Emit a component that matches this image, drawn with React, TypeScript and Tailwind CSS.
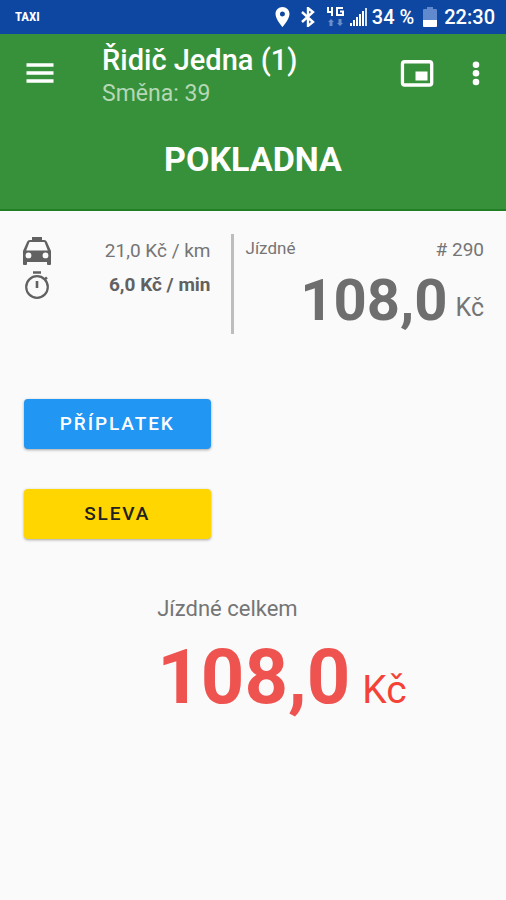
import type { ReactNode } from 'react'

const SIGNAL_BARS = [3, 6, 9, 12, 15, 18]

function Icon({ className, children }: { className: string; children: ReactNode }) {
  return (
    <svg viewBox="0 0 24 24" fill="currentColor" aria-hidden="true" className={`shrink-0 ${className}`}>
      {children}
    </svg>
  )
}

function StatusBar() {
  return (
    <div className="flex h-[34px] items-center bg-[#0d47a1] pl-[15px] pr-[11px] text-white">
      <span className="font-['Liberation_Sans_Narrow','Roboto_Condensed',Roboto,sans-serif] text-[13px] font-bold">TAXI</span>
      <div className="ml-auto flex items-center">
        <svg viewBox="0 0 14 20" aria-hidden="true" className="h-5 w-[15px]">
          <path
            d="M7 0C3.1 0 0 3.1 0 7c0 5.2 7 13 7 13s7-7.8 7-13c0-3.9-3.1-7-7-7zm0 9.5a2.5 2.5 0 1 1 0-5 2.5 2.5 0 0 1 0 5z"
            fill="#fff"
          />
        </svg>
        <svg viewBox="0 0 14 20" aria-hidden="true" className="ml-[11px] h-5 w-[14px]">
          <path d="M1 5l11 10-5 4V1l5 4L1 15" fill="none" stroke="#fff" strokeWidth="2.4" />
        </svg>
        <svg viewBox="0 0 18 20" aria-hidden="true" className="ml-[11px] h-5 w-[18px]">
          <path d="M2 0v5h5M6 0v9M17 1h-6v7h6V4.5h-3" fill="none" stroke="#fff" strokeWidth="2" />
          <path d="M5 12l3 3H6.5v4h-3v-4H2zM14 19l-3-3h1.5v-4h3v4H17z" fill="#6d8fc9" />
        </svg>
        <svg viewBox="0 0 18 20" aria-hidden="true" className="ml-[6px] h-5 w-[18px]">
          {SIGNAL_BARS.map((h, i) => (
            <rect key={h} x={i * 3} y={19 - h} width="2" height={h} fill={i < 5 ? '#fff' : '#d5e0f3'} />
          ))}
        </svg>
        <span className="ml-1 text-[20px] font-medium leading-6">34 %</span>
        <svg viewBox="0 0 14 20" aria-hidden="true" className="ml-[9px] h-5 w-[14px]">
          <path d="M4 0h6v2h3a1 1 0 0 1 1 1v11H0V3a1 1 0 0 1 1-1h3z" fill="#6089ce" />
          <path d="M0 13h14v6a1 1 0 0 1-1 1H1a1 1 0 0 1-1-1z" fill="#fff" />
        </svg>
        <span className="ml-[7px] text-[20px] font-medium leading-6">22:30</span>
      </div>
    </div>
  )
}

function Header() {
  return (
    <header className="border-b-2 border-[#1f7f22] bg-[#37913a] pb-[30px] text-white">
      <div className="flex items-start pl-[22px] pr-3 pt-2">
        <button type="button" aria-label="Menu" className="mt-[13px]">
          <Icon className="h-9 w-9">
            <path d="M3 18.5h18v-2.4H3zM3 13.2h18v-2.4H3zM3 5.5v2.4h18V5.5z" />
          </Icon>
        </button>
        <div className="ml-[44px] flex-1">
          <div className="text-[29px] font-medium leading-9">Řidič Jedna (1)</div>
          <div className="text-[23px] leading-8 text-[#b5d8b6]">Směna: 39</div>
        </div>
        <button type="button" aria-label="Obraz v obraze" className="mt-[13px]">
          <Icon className="h-9 w-9">
            <rect x="2.3" y="4.5" width="19.5" height="15.5" rx="1.5" fill="none" stroke="currentColor" strokeWidth="2.2" />
            <rect x="11" y="11" width="8" height="6" />
          </Icon>
        </button>
        <button type="button" aria-label="Další možnosti" className="ml-[23px] mt-[13px]">
          <Icon className="h-9 w-9">
            <circle cx="12" cy="6.5" r="2.2" />
            <circle cx="12" cy="12.2" r="2.2" />
            <circle cx="12" cy="18" r="2.2" />
          </Icon>
        </button>
      </div>
      <h1 className="mt-[29px] text-center text-[34px] font-bold leading-10">POKLADNA</h1>
    </header>
  )
}

function Rates() {
  return (
    <div className="flex h-[100px] flex-col border-r-[3px] border-[#bdbdbd] pl-[23px] pr-5 text-[19px] leading-[34px] text-[#757575]">
      <div className="flex items-center justify-between">
        <svg viewBox="0 0 28 28" aria-hidden="true" className="h-7 w-7 text-[#616161]">
          <path
            d="M9 0h10v3h2c1.5 0 2.5.8 3 2l4 9v13a1 1 0 0 1-1 1h-2a1 1 0 0 1-1-1v-2H4v2a1 1 0 0 1-1 1H1a1 1 0 0 1-1-1V14l4-9c.5-1.2 1.5-2 3-2h2zM6.5 5L3.2 13.5h21.6L21.5 5zM5.5 15.5a2.9 2.9 0 1 0 0 5.8 2.9 2.9 0 0 0 0-5.8zm17 0a2.9 2.9 0 1 0 0 5.8 2.9 2.9 0 0 0 0-5.8z"
            fill="currentColor"
            fillRule="evenodd"
          />
        </svg>
        <span>21,0 Kč / km</span>
      </div>
      <div className="flex items-center justify-between">
        <svg viewBox="0 0 28 28" aria-hidden="true" className="h-7 w-7 text-[#616161]">
          <circle cx="14" cy="16" r="10.8" fill="none" stroke="currentColor" strokeWidth="2.2" />
          <path d="M14 10v7M10 1.5h8M21.5 8.5l2.5-2" fill="none" stroke="currentColor" strokeWidth="2.6" />
        </svg>
        <span className="font-bold text-[#616161]">6,0 Kč / min</span>
      </div>
    </div>
  )
}

function Fare() {
  return (
    <div className="pl-3 pr-[22px] text-[#757575]">
      <div className="flex items-center justify-between leading-7">
        <span className="pb-1 text-[17px]">Jízdné</span>
        <span className="text-[19px]"># 290</span>
      </div>
      <div className="flex items-end justify-end gap-2">
        <span className="text-[58px] font-bold leading-[68px] text-[#6e6e6e]">108,0</span>
        <span className="pb-[6px] text-[25px] leading-10">Kč</span>
      </div>
    </div>
  )
}

export default function App() {
  return (
    <div className="min-h-screen bg-[#fafafa] font-[Roboto,sans-serif]">
      <StatusBar />
      <Header />
      <main>
        <section className="grid grid-cols-[6fr_7fr] pt-[23px]">
          <Rates />
          <Fare />
        </section>
        <div className="mt-[65px] grid grid-cols-[6fr_7fr]">
          <div className="flex flex-col gap-10 pl-6 pr-[23px] text-[19px] font-medium">
            <button type="button" className="h-[50px] rounded bg-[#2196f3] tracking-widest text-white shadow-[0_1px_3px_rgba(0,0,0,0.35)]">
              PŘÍPLATEK
            </button>
            <button type="button" className="h-[50px] rounded bg-[#ffd600] tracking-widest text-[#212121] shadow-[0_1px_3px_rgba(0,0,0,0.35)]">
              SLEVA
            </button>
          </div>
        </div>
        <section className="mx-auto mt-[54px] w-fit pl-[58px]">
          <div className="text-[22px] leading-8 text-[#757575]">Jízdné celkem</div>
          <div className="flex items-baseline gap-3 text-[#ef5350]">
            <span className="text-[76px] font-bold leading-[104px]">108,0</span>
            <span className="text-[39px] text-[#f44336]">Kč</span>
          </div>
        </section>
      </main>
    </div>
  )
}
